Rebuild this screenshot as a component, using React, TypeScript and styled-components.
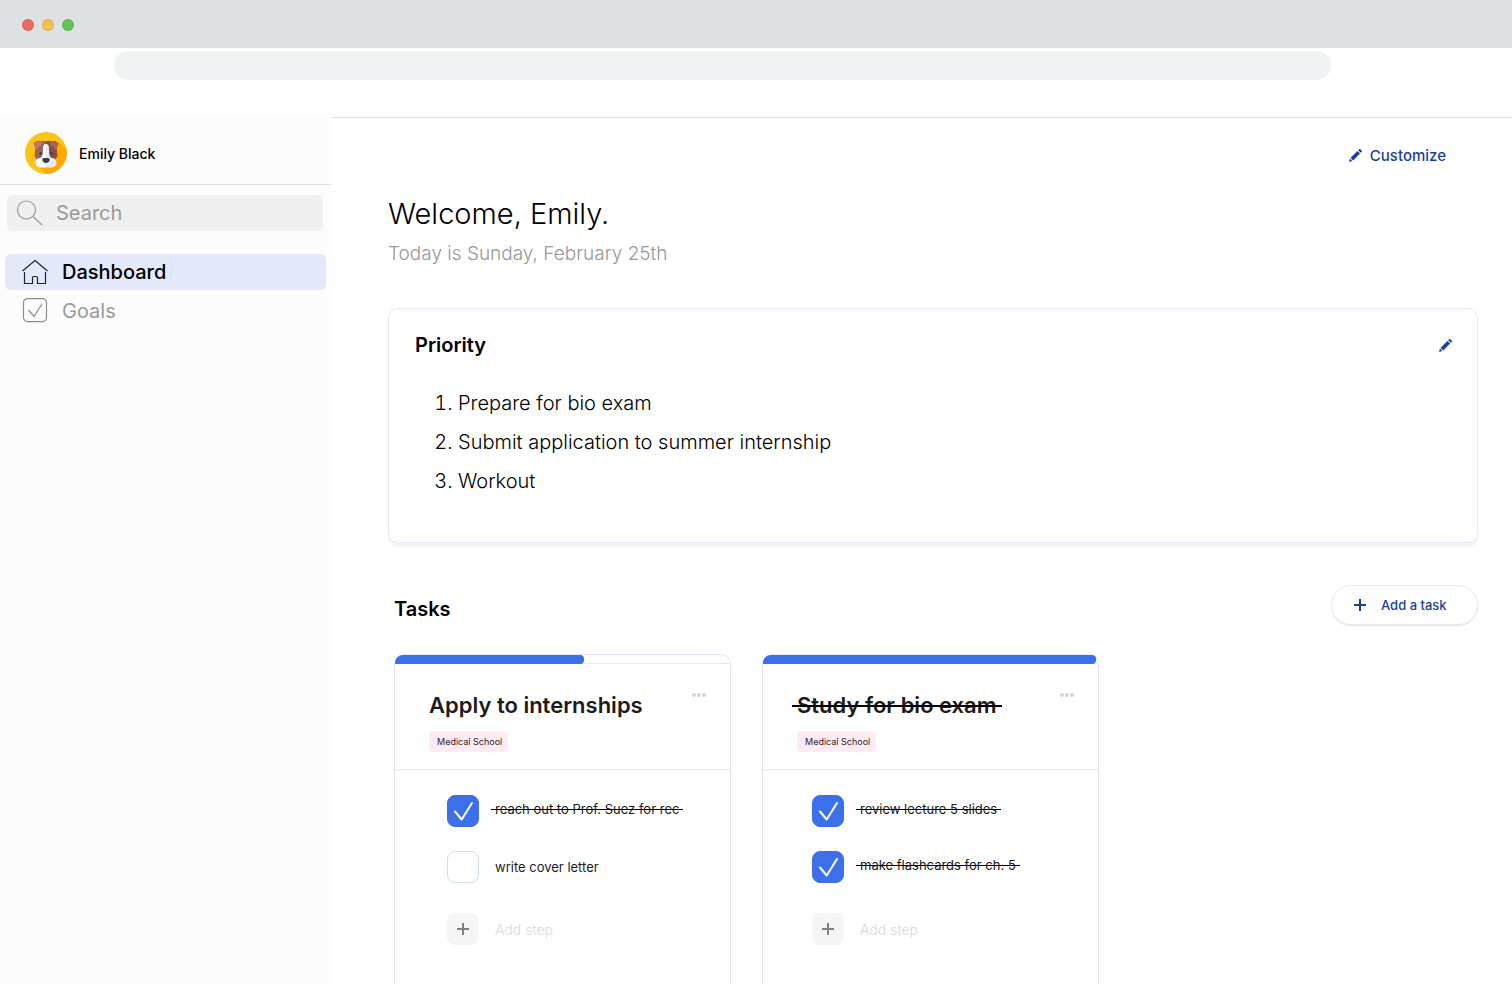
import React, { useState } from "react";
import styled, { createGlobalStyle } from "styled-components";

const Global = createGlobalStyle`
  *, *::before, *::after { box-sizing: border-box; }
  body { margin: 0; background: #fff; color: #000; font-family: Inter, "Liberation Sans", sans-serif; }
  h1, h2, h3, p, ol, ul { margin: 0; padding: 0; }
  button, input { font: inherit; color: inherit; }
  button { background: none; border: 0; padding: 0; cursor: pointer; }
  svg { display: block; flex: none; }
`;

const Page = styled.div`
  min-height: 100vh;
  display: flex;
  flex-direction: column;
`;
const TitleBar = styled.header`
  height: 48px;
  padding: 1px 0 0 22px;
  background: #dfe0e4;
  display: flex;
  align-items: center;
  gap: 8px;
`;
const Light = styled.span<{ $color: string }>`
  width: 12px;
  height: 12px;
  border-radius: 50%;
  background: ${(p) => p.$color};
  border: 1px solid rgba(0, 0, 0, 0.08);
`;
const AddressBar = styled.div`
  height: 69px;
  padding: 3px 181px 0 114px;
`;
const Address = styled.div`
  height: 29px;
  border-radius: 15px;
  background: #eff3f4;
`;
const Body = styled.div`
  flex: 1;
  display: flex;
`;
const Sidebar = styled.aside`
  width: 331px;
  flex: none;
  background: #fcfcfc;
`;
const Profile = styled.div`
  height: 68px;
  padding: 4px 25px 0;
  border-bottom: 1px solid #e2e2e4;
  display: flex;
  align-items: center;
  gap: 12px;
  font-size: 14px;
  font-weight: 500;
`;
const ProfileName = styled.span`
  padding-top: 2px;
`;
const SearchBox = styled.label`
  height: 36px;
  margin: 10px 8px 23px 7px;
  padding: 0 9px;
  border-radius: 6px;
  background: #f0f0f0;
  color: #9a9a9a;
  display: flex;
  align-items: center;
  gap: 13px;
`;
const SearchInput = styled.input`
  flex: 1;
  min-width: 0;
  border: 0;
  padding: 0;
  outline: 0;
  background: none;
  font-size: 20px;
  line-height: 24px;
  &::placeholder { color: #9a9a9a; opacity: 1; }
`;
const Nav = styled.nav`
  margin: 0 5px;
  display: flex;
  flex-direction: column;
  gap: 3px;
`;
const NavLink = styled.a<{ $active?: boolean }>`
  height: 36px;
  padding-left: 17px;
  border-radius: 6px;
  display: flex;
  align-items: center;
  gap: 14px;
  font-size: 20px;
  font-weight: ${(p) => (p.$active ? 500 : 400)};
  text-decoration: none;
  color: ${(p) => (p.$active ? "#000" : "#9a9a9a")};
  background: ${(p) => (p.$active ? "#e3e9fa" : "transparent")};
`;
const Main = styled.main`
  flex: 1;
  min-width: 0;
  border-top: 1px solid #e0e0e2;
  padding: 25px 34px 0 57px;
  display: flex;
  flex-direction: column;
`;
const Customize = styled.button`
  align-self: flex-end;
  margin-right: 32px;
  height: 24px;
  display: flex;
  align-items: center;
  gap: 8px;
  font-size: 15px;
  font-weight: 500;
  color: #1b3f94;
`;
const Welcome = styled.h1`
  margin-top: 29px;
  font-size: 29px;
  line-height: 36px;
  font-weight: 300;
`;
const Today = styled.p`
  margin-top: 10px;
  font-size: 19px;
  line-height: 24px;
  font-weight: 300;
  color: #989898;
`;
const PriorityCard = styled.section`
  margin-top: 42px;
  min-height: 235px;
  padding: 24px 25px 40px 26px;
  border: 1px solid #e3e9fb;
  border-radius: 10px;
  box-shadow: 0 4px 2px rgba(0, 0, 0, 0.05);
`;
const Row = styled.div`
  display: flex;
  align-items: center;
  justify-content: space-between;
`;
const SectionTitle = styled.h2`
  font-size: 20px;
  line-height: 24px;
  font-weight: 600;
`;
const IconButton = styled.button`
  color: #1b3f94;
`;
const PriorityList = styled.ol`
  margin-top: 27px;
  padding-left: 43px;
  font-size: 20px;
  line-height: 39px;
  font-weight: 300;
`;
const TaskBar = styled(Row)`
  margin-top: 42px;
  padding-left: 6px;
  ${SectionTitle} { padding-top: 8px; }
`;
const AddTask = styled.button`
  width: 147px;
  height: 40px;
  padding-left: 22px;
  border: 1px solid #e9e9ec;
  border-radius: 20px;
  box-shadow: 0 1px 1px rgba(0, 0, 0, 0.12);
  display: flex;
  align-items: center;
  gap: 15px;
  font-size: 13px;
  font-weight: 500;
  color: #1b3f94;
`;
const Board = styled.div`
  flex: 1;
  margin: 29px 0 0 6px;
  display: flex;
  flex-wrap: wrap;
  gap: 31px;
`;
const TaskCard = styled.article`
  width: 337px;
  min-height: 330px;
  border: 1px solid #e3e6f8;
  border-bottom: 0;
  border-radius: 10px 10px 0 0;
`;
const Track = styled.div`
  height: 9px;
  border-bottom: 1px solid #e3e9fb;
`;
const Fill = styled.div`
  height: 9px;
  background: #3c6fea;
  border-radius: 8px 4px 4px 0;
`;
const CardHead = styled.div`
  height: 106px;
  padding: 27px 24px 0 34px;
  border-bottom: 1px solid #e3e6f8;
  display: flex;
  justify-content: space-between;
  align-items: flex-start;
`;
const CardTitle = styled.h3`
  font-size: 22px;
  line-height: 28px;
  font-weight: 600;
  color: #1c1c1a;
`;
const Tag = styled.span`
  display: inline-block;
  margin-top: 12px;
  padding: 0 6px 0 8px;
  border-radius: 4px;
  background: #feebf4;
  font-size: 9px;
  line-height: 21px;
  color: #2c2328;
`;
const MoreButton = styled.button`
  padding-top: 2px;
`;
const Struck = styled.span<{ $on: boolean }>`
  position: relative;
  &::after {
    content: "";
    display: ${(p) => (p.$on ? "block" : "none")};
    position: absolute;
    top: 50%;
    left: -4px;
    right: -4px;
    height: 1px;
    background: #000;
  }
`;
const HeadStruck = styled(Struck)`
  &::after { height: 2px; left: -5px; right: -5px; }
`;
const Steps = styled.div<{ $inset: number }>`
  padding: 25px 16px 30px ${(p) => p.$inset}px;
  display: flex;
  flex-direction: column;
  gap: 24px;
`;
const Step = styled.label<{ $done: boolean }>`
  height: 32px;
  display: flex;
  align-items: center;
  gap: 16px;
  font-size: 13px;
  line-height: 18px;
  font-weight: 400;
  color: #1a1a1a;
  ${Struck} { margin-bottom: ${(p) => (p.$done ? 4 : 0)}px; }
`;
const BoxWrap = styled.span`
  position: relative;
  width: 32px;
  height: 32px;
  svg { position: absolute; inset: 0; pointer-events: none; }
`;
const Check = styled.input`
  appearance: none;
  display: block;
  width: 32px;
  height: 32px;
  margin: 0;
  border: 1px solid #cfdcfa;
  border-radius: 8px;
  &:checked { background: #3c6fea; border-color: #3c6fea; }
`;
const AddStep = styled.button`
  margin-top: 6px;
  height: 32px;
  display: flex;
  align-items: center;
  gap: 16px;
  font-size: 14px;
  font-weight: 300;
  color: #d8d8d8;
`;
const PlusTile = styled.span`
  width: 32px;
  height: 32px;
  border-radius: 8px;
  background: #f5f5f5;
  color: #808080;
  display: grid;
  place-items: center;
`;

const Dog = () => (
  <svg width="42" height="42" viewBox="0 0 42 42" aria-hidden="true">
    <circle cx="21" cy="21" r="21" fill="#fcc419" />
    <path d="M33 10 41.3 17A21 21 0 0 1 21 42L14 35Z" fill="#ffa801" />
    <path d="M11 9h11v24h-7l-5.500-9Z" fill="#a5614f" />
    <path d="M21 9h10l1.500 15-5.500 9h-6Z" fill="#8b4e42" />
    <path d="M8.300 10.500Q13 9.500 18 8.500L16.500 13l-5.500 4.500Q9 14.500 8.300 10.500Z" fill="#b8796a" />
    <path d="M33.700 10.500Q29 9.500 24 8.500L25.500 13l5.500 4.500Q33 14.500 33.700 10.500Z" fill="#a3675a" />
    <path d="M18 15.500c0-2.500 1.500-3.500 3-3.500v23.500h-4.500c-3.500 0-6-2-6-5 0-2.500 2-4.500 4.500-4.500 2.500-.5 3-4 3-10.500Z" fill="#fff" />
    <path d="M24 15.500c0-2.500-1.500-3.500-3-3.500v23.500h4.500c3.500 0 6-2 6-5 0-2.500-2-4.500-4.500-4.500-2.500-.5-3-4-3-10.500Z" fill="#e6ecf5" />
    <circle cx="15.700" cy="21.400" r="1.500" fill="#3b4653" />
    <circle cx="26.300" cy="21.400" r="1.500" fill="#3b4653" />
    <path d="M17.300 27.500q0-1.500 1.500-1.500h4.400q1.500 0 1.500 1.500c0 2-1.700 3.500-3.700 3.500s-3.700-1.500-3.700-3.500Z" fill="#35404d" />
  </svg>
);
const SearchIcon = () => (
  <svg width="27" height="27" viewBox="0 0 27 27" fill="none" stroke="currentColor" strokeWidth="1.200" aria-hidden="true">
    <circle cx="10.500" cy="10" r="9" />
    <path d="M17 16.500 26 25" />
  </svg>
);
const HomeIcon = () => (
  <svg width="26" height="26" viewBox="0 0 26 26" fill="none" stroke="#222" strokeWidth="1.200" aria-hidden="true">
    <path d="M.5 12 13 1.500l12.500 10.500M2.500 13v11.500h8V18.500q0-1 1-1h3q1 0 1 1v6h8V13" />
  </svg>
);
const GoalsIcon = () => (
  <svg width="26" height="26" viewBox="0 0 26 26" fill="none" stroke="#8d8d8d" strokeWidth="1.200" aria-hidden="true">
    <rect x="1.500" y=".6" width="23" height="23" rx="4" />
    <path d="m6.500 12 5.500 6.500L20 6" />
  </svg>
);
const Pencil = () => (
  <svg width="13" height="13" viewBox="0 0 13 13" fill="currentColor" aria-hidden="true">
    <path d="m8.500 1.900 2.600 2.600-6.900 6.900-2.600-2.600Z" />
    <path d="m9.200 1.200 1-1Q10.700-.2 11.200.2l1.600 1.600q.4.500 0 1l-1 1Z" />
    <path d="M1 9.600 3.400 12 0 13Z" />
  </svg>
);
const Plus = () => (
  <svg width="12" height="12" viewBox="0 0 12 12" stroke="currentColor" strokeWidth="2" aria-hidden="true">
    <path d="M6 0v12M0 6h12" />
  </svg>
);
const Tick = () => (
  <svg width="32" height="32" viewBox="0 0 32 32" fill="none" stroke="#fff" strokeWidth="2" strokeLinecap="round" strokeLinejoin="round" aria-hidden="true">
    <path d="m8 16.500 6.700 8L25 8" />
  </svg>
);
const Dots = () => (
  <svg width="14" height="4" viewBox="0 0 14 4" fill="#d4d4d4" aria-hidden="true">
    <circle cx="2" cy="2" r="2" />
    <circle cx="7" cy="2" r="2" />
    <circle cx="12" cy="2" r="2" />
  </svg>
);

type StepData = { text: string; done: boolean };
type TaskData = { title: string; done: boolean; progress: number; inset: number; steps: StepData[] };

const tasks: TaskData[] = [
  {
    title: "Apply to internships",
    done: false,
    progress: 56.5,
    inset: 52,
    steps: [
      { text: "reach out to Prof. Suez for rec", done: true },
      { text: "write cover letter", done: false },
    ],
  },
  {
    title: "Study for bio exam",
    done: true,
    progress: 99.4,
    inset: 49,
    steps: [
      { text: "review lecture 5 slides", done: true },
      { text: "make flashcards for ch. 5", done: true },
    ],
  },
];

function StepRow({ step }: { step: StepData }) {
  const [done, setDone] = useState(step.done);
  return (
    <Step $done={done}>
      <BoxWrap>
        <Check type="checkbox" checked={done} onChange={() => setDone(!done)} />
        {done && <Tick />}
      </BoxWrap>
      <Struck $on={done}>{step.text}</Struck>
    </Step>
  );
}

function Task({ task }: { task: TaskData }) {
  return (
    <TaskCard>
      <Track>
        <Fill style={{ width: `${task.progress}%` }} />
      </Track>
      <CardHead>
        <div>
          <CardTitle>
            <HeadStruck $on={task.done}>{task.title}</HeadStruck>
          </CardTitle>
          <Tag>Medical School</Tag>
        </div>
        <MoreButton aria-label="Task options">
          <Dots />
        </MoreButton>
      </CardHead>
      <Steps $inset={task.inset}>
        {task.steps.map((s) => (
          <StepRow key={s.text} step={s} />
        ))}
        <AddStep>
          <PlusTile>
            <Plus />
          </PlusTile>
          Add step
        </AddStep>
      </Steps>
    </TaskCard>
  );
}

export default function App() {
  return (
    <Page>
      <Global />
      <TitleBar>
        <Light $color="#ed6a5e" />
        <Light $color="#f5bf4f" />
        <Light $color="#61c554" />
      </TitleBar>
      <AddressBar>
        <Address />
      </AddressBar>
      <Body>
        <Sidebar>
          <Profile>
            <Dog />
            <ProfileName>Emily Black</ProfileName>
          </Profile>
          <SearchBox>
            <SearchIcon />
            <SearchInput type="search" placeholder="Search" aria-label="Search" />
          </SearchBox>
          <Nav>
            <NavLink href="#dashboard" $active>
              <HomeIcon />
              Dashboard
            </NavLink>
            <NavLink href="#goals">
              <GoalsIcon />
              Goals
            </NavLink>
          </Nav>
        </Sidebar>
        <Main>
          <Customize>
            <Pencil />
            Customize
          </Customize>
          <Welcome>Welcome, Emily.</Welcome>
          <Today>Today is Sunday, February 25th</Today>
          <PriorityCard>
            <Row>
              <SectionTitle>Priority</SectionTitle>
              <IconButton aria-label="Edit priorities">
                <Pencil />
              </IconButton>
            </Row>
            <PriorityList>
              <li>Prepare for bio exam</li>
              <li>Submit application to summer internship</li>
              <li>Workout</li>
            </PriorityList>
          </PriorityCard>
          <TaskBar>
            <SectionTitle>Tasks</SectionTitle>
            <AddTask>
              <Plus />
              Add a task
            </AddTask>
          </TaskBar>
          <Board>
            {tasks.map((t) => (
              <Task key={t.title} task={t} />
            ))}
          </Board>
        </Main>
      </Body>
    </Page>
  );
}
